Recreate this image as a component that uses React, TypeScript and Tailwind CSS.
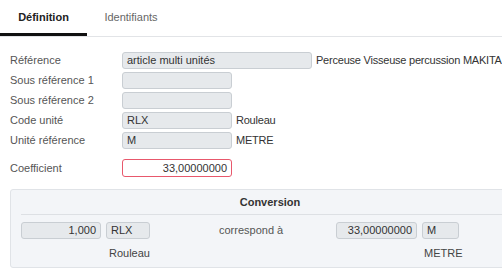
import React from 'react'

const font = { fontFamily: '"Liberation Sans", Arial, sans-serif' }

function Box({ value, w, right }: { value?: string; w: string; right?: boolean }) {
  return (
    <div
      className={`${w} shrink-0 h-[17px] rounded-[3px] border border-[#c9ced3] bg-[#e6e9ec] px-[4px] text-[11px] leading-[15px] text-[#333] ${right ? 'text-right' : ''}`}
    >
      {value}
    </div>
  )
}

function Row({ label, value, w = 'w-[110px]', after }: { label: string; value?: string; w?: string; after?: string }) {
  return (
    <div className="flex items-center h-[20px]">
      <div className="w-[112px] shrink-0 text-[11px] text-[#555]">{label}</div>
      <Box value={value} w={w} />
      {after && <div className="ml-[4px] text-[11px] tracking-[-0.22px] text-[#333] whitespace-nowrap">{after}</div>}
    </div>
  )
}

export default function App() {
  return (
    <div className="w-[502px] h-[277px] bg-white overflow-hidden" style={font}>
      {/* tabs */}
      <div className="flex h-[37px] border-b border-[#e2e4e7]">
        <div className="w-[87px] flex items-center justify-center border-b-[3px] border-[#111] text-[11px] font-bold text-[#222] pt-[1px]">
          Définition
        </div>
        <div className="w-[88px] flex items-center justify-center text-[11px] text-[#666] pb-[2px]">
          Identifiants
        </div>
      </div>

      <div className="pl-[10px] pt-[13px]">
        <Row label="Référence" value="article multi unités" w="w-[190px]" after="Perceuse Visseuse percussion MAKITA" />
        <Row label="Sous référence 1" />
        <Row label="Sous référence 2" />
        <Row label="Code unité" value="RLX" after="Rouleau" />
        <Row label="Unité référence" value="M" after="METRE" />

        <div className="flex items-center h-[20px] mt-[8px]">
          <div className="w-[112px] shrink-0 text-[11px] text-[#555]">Coefficient</div>
          <div className="w-[110px] h-[18px] rounded-[3px] border border-[#e8586c] bg-white px-[4px] text-[11px] leading-[16px] text-[#333] text-right">
            33,00000000
          </div>
        </div>

        {/* conversion panel */}
        <div className="mt-[11px] w-[520px] h-[79px] rounded-[3px] border border-[#e0e3e7] bg-[#f3f5f8] px-[10px]">
          <div className="h-[25px] border-b border-[#dde0e4] flex items-center justify-center text-[11px] font-bold text-[#333] pl-[30px] pr-[30px]">
            Conversion
          </div>
          <div className="flex items-center mt-[7px]">
            <Box value="1,000" w="w-[80px]" right />
            <div className="ml-[5px]"><Box value="RLX" w="w-[44px]" /></div>
            <div className="ml-[69px] w-[117px] shrink-0 text-[11px] text-[#555]">correspond à</div>
            <Box value="33,00000000" w="w-[81px]" right />
            <div className="ml-[5px]"><Box value="M" w="w-[37px]" /></div>
          </div>
          <div className="flex mt-[6px] text-[11px] text-[#444]">
            <div className="ml-[88px] w-[315px] shrink-0">Rouleau</div>
            <div>METRE</div>
          </div>
        </div>
      </div>
    </div>
  )
}
